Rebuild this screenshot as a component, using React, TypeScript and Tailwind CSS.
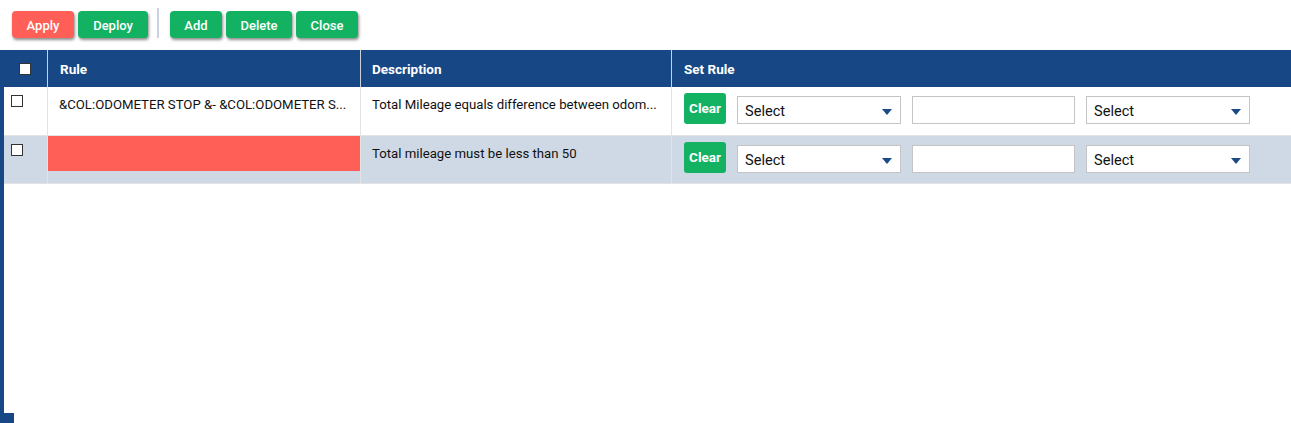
import React from "react";

const Btn = ({ label, color, w }: { label: string; color: string; w: string }) => (
  <button
    className={`h-[27px] ${w} ${color} rounded-[4px] text-white text-[13px] font-medium shadow-[1px_2px_3px_rgba(0,0,0,0.45)] flex items-center justify-center pt-[3px]`}
  >
    {label}
  </button>
);

const Caret = () => (
  <svg width="10" height="6" viewBox="0 0 10 6" className="absolute right-[8px] top-[12px]">
    <path d="M0 0 L10 0 L5 6 Z" fill="#1b4a86" />
  </svg>
);

const SelectBox = () => (
  <div className="relative w-[164px] h-[28px] bg-white border border-[#c4c4c4] flex items-center pl-[7px] pt-[3px] text-[14.6px] text-[#111]">
    Select
    <Caret />
  </div>
);

const Box = () => <div className="w-[12px] h-[12px] border-[1.5px] border-[#333] bg-white" />;

const SetRule = () => (
  <div className="flex items-start pl-[12px] pt-[6px] gap-[11px]">
    <button className="w-[42px] h-[31px] bg-[#13b262] rounded-[3px] text-white text-[13.5px] font-bold flex items-center justify-center">
      Clear
    </button>
    <div className="pt-[3px] flex gap-[11px]">
      <SelectBox />
      <div className="w-[163px] h-[28px] bg-white border border-[#c4c4c4]" />
      <SelectBox />
    </div>
  </div>
);

export default function App() {
  return (
    <div className="w-[1291px] h-[423px] bg-white overflow-hidden" style={{ fontFamily: "Roboto, 'Liberation Sans', sans-serif" }}>
      <div className="h-[50px] flex items-start pt-[11px] pl-[12px]">
        <div className="flex gap-[4px]">
          <Btn label="Apply" color="bg-[#ff5f57]" w="w-[62px]" />
          <Btn label="Deploy" color="bg-[#13b262]" w="w-[70px]" />
        </div>
        <div className="w-[2px] h-[30px] bg-[#c9d3e0] mt-[-3px] ml-[9px] mr-[11px]" />
        <div className="flex gap-[4px]">
          <Btn label="Add" color="bg-[#13b262]" w="w-[52px]" />
          <Btn label="Delete" color="bg-[#13b262]" w="w-[66px]" />
          <Btn label="Close" color="bg-[#13b262]" w="w-[62px]" />
        </div>
      </div>
      <div className="h-[37px] bg-[#174784] flex text-white text-[13.5px] font-bold">
        <div className="w-[48px] flex justify-center items-start pt-[13px] border-r border-[#c9d1dc]">
          <div className="w-[12px] h-[12px] bg-white border-[1.5px] border-[#333] ml-[3px]" />
        </div>
        <div className="w-[313px] pl-[12px] pt-[1px] flex items-center border-r border-[#c9d1dc]">Rule</div>
        <div className="w-[311px] pl-[11px] pt-[1px] flex items-center border-r border-[#c9d1dc]">Description</div>
        <div className="flex-1 pl-[12px] pt-[1px] flex items-center">Set Rule</div>
      </div>
      <div className="h-[326px] border-l-4 border-[#174784]">
        <div className="h-[49px] flex border-b border-[#e3e3e3] bg-white">
          <div className="w-[44px] pl-[7px] pt-[8px] border-r border-[#e3e3e3]">
            <Box />
          </div>
          <div className="w-[313px] pl-[11px] pt-[8px] text-[13.2px] text-[#111] border-r border-[#e3e3e3] whitespace-nowrap overflow-hidden">
            &amp;COL:ODOMETER STOP &amp;- &amp;COL:ODOMETER S...
          </div>
          <div className="w-[311px] pl-[11px] pt-[8px] text-[13.2px] text-[#111] border-r border-[#e3e3e3] whitespace-nowrap overflow-hidden">
            Total Mileage equals difference between odom...
          </div>
          <div className="flex-1">
            <SetRule />
          </div>
        </div>
        <div className="h-[48px] flex border-b border-[#e3e3e3] bg-[#cfd9e5]">
          <div className="w-[44px] pl-[7px] pt-[8px] border-r border-[#e3e3e3]">
            <Box />
          </div>
          <div className="w-[313px] border-r border-[#e3e3e3]">
            <div className="h-[35px] bg-[#ff5f57]" />
          </div>
          <div className="w-[311px] pl-[11px] pt-[8px] text-[13.2px] text-[#111] border-r border-[#e3e3e3] whitespace-nowrap overflow-hidden">
            Total mileage must be less than 50
          </div>
          <div className="flex-1">
            <SetRule />
          </div>
        </div>
      </div>
      <div className="w-[14px] h-[10px] bg-[#174784]" />
    </div>
  );
}
